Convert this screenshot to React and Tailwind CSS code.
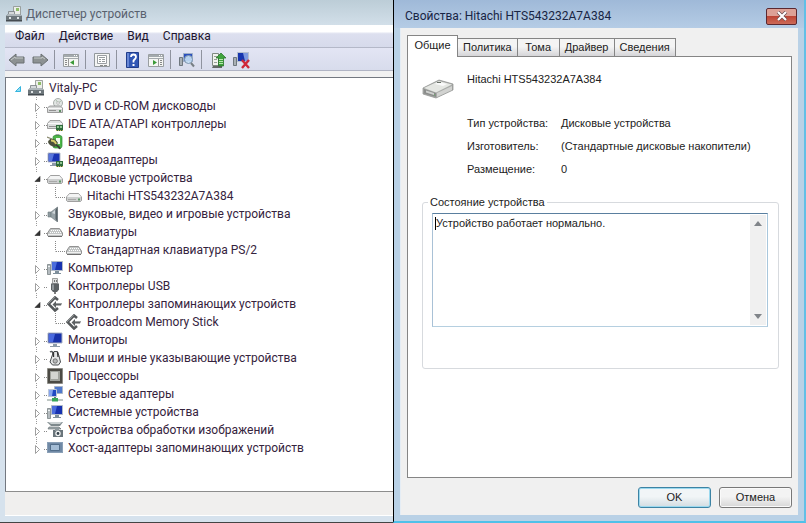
import React from "react";

const icons = {
  root: (
    <>
      <path d="M7.500 .5h7v8h-7z" fill="#eceeea" stroke="#8a8f8c" strokeWidth=".8" />
      <path d="M10 2h3v3h-3z" fill="#8fbd68" />
      <path d="M2.500 5.500h6v3h-6z" fill="#d5d9db" stroke="#777e82" strokeWidth=".8" />
      <path d="M0 10l2-2h12l2 2v5H0z" fill="#6d767b" />
      <path d="M2 8h12l1.500 2H.5z" fill="#aeb6ba" />
      <path d="M3 11h2v2H3zM11 11h2v2h-2z" fill="#e2e6e8" />
      <path d="M0 14h16v1.500H0z" fill="#444b50" />
    </>
  ),
  dvd: (
    <>
      <circle cx="11" cy="5" r="4.500" fill="#e2e6e4" stroke="#a8aeab" />
      <path d="M9 2l2 3 3-2" stroke="#a9bfab" fill="none" />
      <circle cx="11" cy="5" r="1.300" fill="#fff" stroke="#999" strokeWidth=".6" />
      <path d="M2.500 8h11l2 2v4.500H.5V10z" fill="#d5d7d7" stroke="#888" strokeWidth=".8" />
      <path d="M1 10.500h14" stroke="#f8f8f8" />
      <path d="M2 12.500h7" stroke="#909090" />
      <path d="M12 12h2v2h-2z" fill="#5f8f63" />
    </>
  ),
  ide: (
    <>
      <path d="M3 4.500h10l2.500 3v5H.5v-5z" fill="#dcdede" stroke="#8b8b8b" strokeWidth=".8" />
      <path d="M1 7.500h14" stroke="#f9f9f9" />
      <path d="M2 10.500h7" stroke="#909090" />
      <path d="M9 9h7v6H9z" fill="#2f6b3c" />
      <path d="M10 10h2v2h-2zM13 10h2v2h-2z" fill="#8fc490" />
      <path d="M9 14.500h7" stroke="#c8b567" strokeDasharray="1 1" />
    </>
  ),
  battery: (
    <>
      <path d="M8.500 0h4v2h-4z" fill="#9fa8a0" />
      <rect x="6" y="1.500" width="9" height="12.500" rx="2" fill="#4db548" stroke="#2d8a30" strokeWidth=".7" />
      <path d="M9 4h4v6H9z" fill="#f1faee" />
      <path d="M0 3l5 2M1 7l3 1" stroke="#8a8a70" strokeWidth="1.200" />
      <path d="M3 5q5-1 8 4l-3 4q-6-1-7-5z" fill="#4b4f3c" />
      <path d="M4 6.500q4 0 5 3.500" fill="none" stroke="#d6cc6a" strokeWidth="2" />
      <path d="M9 11q3 1 4 4" fill="none" stroke="#3b4236" strokeWidth="2" />
    </>
  ),
  video: (
    <>
      <path d="M1 1h12v9H1z" fill="#1a34b4" stroke="#b6bdc8" />
      <path d="M2 2h5l-2 7H2z" fill="#5775dd" />
      <path d="M5 11h4v2H5zM3 13h8v1H3z" fill="#8b98a8" />
      <path d="M9 9h7v6H9z" fill="#2f6b3c" />
      <path d="M10 10h2v2h-2zM13 10h2v2h-2z" fill="#8fc490" />
      <path d="M9 14.500h7" stroke="#c8b567" strokeDasharray="1 1" />
    </>
  ),
  disk: (
    <>
      <path d="M3.500 5.500h9l3 3.500v3.500l-1 1h-13l-1-1V9z" fill="#cdcfcf" stroke="#8e8e8e" strokeWidth=".8" />
      <path d="M3.500 6h9l2.500 3H1z" fill="#f3f4f4" />
      <path d="M2 11.500h8" stroke="#a8a8a8" />
      <path d="M12 10.500h2v2h-2z" fill="#5f9a69" />
    </>
  ),
  sound: (
    <>
      <path d="M1 6h3v5H1z" fill="#8e9aa0" stroke="#6d787e" strokeWidth=".6" />
      <path d="M4 6l6.500-5v15L4 11z" fill="#98a3a8" stroke="#6d787e" strokeWidth=".6" />
      <path d="M8.500 4l2-3v15l-2-3z" fill="#566167" />
      <path d="M5 7l3-3v4z" fill="#cfd6d9" />
    </>
  ),
  keyboard: (
    <>
      <path d="M3.500 4.500h9L15.500 9v2.500l-1 1h-13l-1-1V9z" fill="#c3c6c6" stroke="#7e7e7e" strokeWidth=".8" />
      <path d="M4 6.500h9" stroke="#fff" strokeDasharray="1 1" />
      <path d="M3 8.500h11" stroke="#fff" strokeDasharray="1 1" />
      <path d="M1 10.500h14" stroke="#f0f0f0" />
      <path d="M1 12.500h14" stroke="#6f6f6f" />
    </>
  ),
  computer: (
    <>
      <path d="M.5 4.500h3v10h-3z" fill="#b4bbbf" stroke="#6c7579" strokeWidth=".7" />
      <path d="M1 6h2v1H1z" fill="#eef1f2" />
      <path d="M4.500 1.500h11v9h-11z" fill="#1732b0" stroke="#b0bac8" />
      <path d="M5 2h5l-2 8H5z" fill="#4a6cdc" />
      <path d="M8 11h4v2H8zM6 13h8v1H6z" fill="#7f909c" />
    </>
  ),
  usb: (
    <>
      <path d="M5.500 .5h5v5h-5z" fill="#dfe1e1" stroke="#8a8a8a" strokeWidth=".8" />
      <path d="M7 2h1v2H7zM9 2h1v2H9z" fill="#777" />
      <path d="M4 5.500h8v6L10 14H6l-2-2.500z" fill="#5c6164" />
      <path d="M5 6.500h2V12H5z" fill="#90969a" />
      <path d="M8 14v2" stroke="#555" strokeWidth="1.500" />
    </>
  ),
  storage: (
    <>
      <path d="M11 4L8 1.500 1.500 8 8 14.500l3-2.500" fill="none" stroke="#55595b" strokeWidth="2.600" />
      <path d="M8 .8L1 8" stroke="#a2a6a8" strokeWidth=".8" />
      <path d="M5.500 8.500L9 5v2h6l-1 2.500H9V12z" fill="#5d6163" />
      <path d="M9 7.500h6" stroke="#a9adae" strokeWidth=".8" />
    </>
  ),
  monitor: (
    <>
      <path d="M1 1h14v10H1z" fill="#1731aa" stroke="#a9b2c4" />
      <path d="M2 2h6l-2 8H2z" fill="#4969df" />
      <path d="M6 12h4v2H6zM3 14h10v1H3z" fill="#8d9caa" />
    </>
  ),
  mouse: (
    <>
      <path d="M3 2q3-2 3 3" fill="none" stroke="#555a5c" strokeWidth="1.500" />
      <path d="M7 1.500h3.500L12 6l1.500 6-2 3h-6L3 12l2-6z" fill="#e3e5e5" stroke="#484c4e" />
      <path d="M6.500 2v5M10.500 2l.5 5" stroke="#333" strokeWidth="1.300" />
      <circle cx="8.200" cy="11" r="2.200" fill="#b6b8b8" stroke="#555" strokeWidth=".7" />
    </>
  ),
  cpu: (
    <>
      <path d="M.5 .5h15v15H.5z" fill="#4b4a44" stroke="#74726a" strokeDasharray="1 1" />
      <path d="M3 3h10v10H3z" fill="#a0a39d" />
      <path d="M4 4h7v7H4z" fill="#d3d5d1" />
    </>
  ),
  network: (
    <>
      <path d="M7.500 .5h8v7h-8z" fill="#4f79cd" stroke="#a9b6c8" />
      <path d="M1.500 3.500h8v7h-8z" fill="#2049c3" stroke="#bdc7d7" />
      <path d="M2 4h4l-1 6H2z" fill="#87a6ee" />
      <path d="M7 11h2v2H7z" fill="#69777f" />
      <path d="M0 14h16" stroke="#a9b5b1" strokeWidth="1.500" />
      <path d="M5 12h6v3.500H5z" fill="#39a75a" />
    </>
  ),
  camera: (
    <>
      <path d="M0 0h16l-3 4H4z" fill="#7e898c" />
      <path d="M1 0h14l-2 2H4z" fill="#ccd2d3" />
      <path d="M2 5h10l2 2H1z" fill="#a6afb2" stroke="#5a6568" strokeWidth=".6" />
      <path d="M6 8h10v7H6z" fill="#6a757b" />
      <path d="M8 7h4v2H8z" fill="#8f999d" />
      <circle cx="11" cy="11.500" r="2.700" fill="#f2f4f4" />
      <circle cx="11" cy="11.500" r="1.400" fill="#35424b" />
    </>
  ),
  host: (
    <>
      <path d="M0 2h16v11H0z" fill="#7089a5" />
      <path d="M.5 2.500h15v10H.5z" fill="none" stroke="#a5b6c8" strokeDasharray="1 1" />
      <path d="M3.500 4.500h9v6h-9z" fill="#a3bcd5" stroke="#4b6784" strokeWidth=".9" />
    </>
  ),
};

function DeviceIcon({ name }) {
  return (
    <svg viewBox="0 0 16 16" className="size-4 shrink-0" aria-hidden="true">
      {icons[name]}
    </svg>
  );
}

const tree = [
  { icon: "dvd", label: "DVD и CD-ROM дисководы" },
  { icon: "ide", label: "IDE ATA/ATAPI контроллеры" },
  { icon: "battery", label: "Батареи" },
  { icon: "video", label: "Видеоадаптеры" },
  { icon: "disk", label: "Дисковые устройства", child: "Hitachi HTS543232A7A384" },
  { icon: "sound", label: "Звуковые, видео и игровые устройства" },
  { icon: "keyboard", label: "Клавиатуры", child: "Стандартная клавиатура PS/2" },
  { icon: "computer", label: "Компьютер" },
  { icon: "usb", label: "Контроллеры USB" },
  { icon: "storage", label: "Контроллеры запоминающих устройств", child: "Broadcom Memory Stick" },
  { icon: "monitor", label: "Мониторы" },
  { icon: "mouse", label: "Мыши и иные указывающие устройства" },
  { icon: "cpu", label: "Процессоры" },
  { icon: "network", label: "Сетевые адаптеры" },
  { icon: "computer", label: "Системные устройства" },
  { icon: "camera", label: "Устройства обработки изображений" },
  { icon: "host", label: "Хост-адаптеры запоминающих устройств" },
];

function Branch({ open, last }) {
  return (
    <svg viewBox="0 0 15 18" className="h-[18px] w-[15px] shrink-0" aria-hidden="true">
      <path d={last ? "M4.500 0v5" : "M4.500 0v4M4.500 16v2"} stroke="#9a9a9a" strokeDasharray="1 1" />
      <path d="M12 10.500h3" stroke="#888" strokeDasharray="1 1" />
      {open ? (
        <path d="M8 7.500v5H3z" fill="#333" stroke="#222" strokeWidth=".6" />
      ) : (
        <path d="M3.500 6.500v8l4-4z" fill="#fff" stroke="#a0a0a0" />
      )}
    </svg>
  );
}

function ChildBranch() {
  return (
    <svg viewBox="0 0 34 18" className="h-[18px] w-[34px] shrink-0" aria-hidden="true">
      <path d="M4.500 0v18M23.500 0v10.500M24 10.500h10" fill="none" stroke="#888" strokeDasharray="1 1" />
    </svg>
  );
}

function DeviceTree() {
  return (
    <ul className="pt-px text-[12px] leading-[18px] text-[#35233d]">
      <li>
        <div className="flex items-center pl-2">
          <svg viewBox="0 0 14 18" className="h-[18px] w-[14px] shrink-0" aria-hidden="true">
            <path d="M6.500 7.500v5h-5z" fill="#8fdcf3" stroke="#35b5df" />
          </svg>
          <DeviceIcon name="root" />
          <span className="pl-[5px]">Vitaly-PC</span>
        </div>
        <ul className="pl-[26px]">
          {tree.map((node, i) => (
            <li key={node.label}>
              <div className="flex items-center">
                <Branch open={Boolean(node.child)} last={i === tree.length - 1} />
                <DeviceIcon name={node.icon} />
                <span className="pl-[5px] whitespace-nowrap">{node.label}</span>
              </div>
              {node.child && (
                <ul>
                  <li className="flex items-center">
                    <ChildBranch />
                    <DeviceIcon name={node.icon} />
                    <span className="pl-[5px] whitespace-nowrap">{node.child}</span>
                  </li>
                </ul>
              )}
            </li>
          ))}
        </ul>
      </li>
    </ul>
  );
}

function ToolButton({ label, children }) {
  return (
    <button type="button" aria-label={label} className="flex size-[18px] items-center justify-center">
      <svg viewBox="0 0 18 18" className="size-[18px]" aria-hidden="true">
        {children}
      </svg>
    </button>
  );
}

function Divider() {
  return <div className="mr-[2px] h-[19px] w-px bg-[#8f939f]" />;
}

function PaneGlyph({ left }) {
  return (
    <>
      <path d="M1.500 3.500h15v12h-15z" fill="#f5f6f4" stroke="#999ea1" />
      <path d="M2 4h14v2H2z" fill="#a4aaae" />
      <path d="M12 4h1v1h-1zM14 4h1v1h-1z" fill="#fff" />
      <path d="M2 7.500h14" stroke="#a5aaae" />
      {left ? (
        <>
          <path d="M6.500 8v7" stroke="#999" />
          <path d="M3 9.500h2M3 11.500h2M3 13.500h2" stroke="#888" />
          <path d="M12 9v5l-4-2.500z" fill="#3b9a38" />
        </>
      ) : (
        <>
          <path d="M11.500 8v7" stroke="#999" />
          <path d="M13 9.500h2M13 11.500h2M13 13.500h2" stroke="#888" />
          <path d="M6 9v5l4-2.500z" fill="#3b9a38" />
        </>
      )}
    </>
  );
}

function DeviceManager() {
  return (
    <section className="flex min-w-0 flex-1 flex-col border-b border-[#444] bg-[#d6e2ed] font-['Roboto','Noto_Sans',sans-serif]">
      <header className="flex h-[25px] items-center gap-1 bg-linear-to-b from-[#bccdd7] to-[#d2dfe9] pt-[3px] pl-[6px]">
        <DeviceIcon name="root" />
        <h1 className="text-[12px] text-[#59616e]">Диспетчер устройств</h1>
      </header>
      <div className="flex flex-1 flex-col pb-[6px] pl-[5px]">
        <nav className="flex h-[23px] items-center gap-[14px] border-b border-[#b4b8c8] bg-linear-to-b from-white from-30% via-[#dde0ef] via-40% to-[#d6daeb] pl-[10px] text-[12px] text-[#21152d]">
          <button type="button">Файл</button>
          <button type="button">Действие</button>
          <button type="button">Вид</button>
          <button type="button">Справка</button>
        </nav>
        <div className="flex h-[23px] items-center gap-[5px] border-b border-[#b0b4c4] bg-linear-to-b from-[#e3e5f4] to-[#d8dcec] pt-px pl-[3px]">
          <ToolButton label="Назад">
            <path d="M1 9l7-6v3h8v6H8v3z" fill="#8d9293" stroke="#6a7072" />
            <path d="M3 9l4-3v1h8" fill="none" stroke="#c6caca" />
          </ToolButton>
          <ToolButton label="Вперёд">
            <path d="M17 9l-7-6v3H2v6h8v3z" fill="#8d9293" stroke="#6a7072" />
            <path d="M3 7h8V6l3 2" fill="none" stroke="#c6caca" />
          </ToolButton>
          <Divider />
          <ToolButton label="Дерево консоли">
            <PaneGlyph left />
          </ToolButton>
          <Divider />
          <ToolButton label="Свойства">
            <path d="M1.500 2.500h15v13h-15z" fill="#f4f5f4" stroke="#92989c" />
            <path d="M4.500 4.500h9v8h-9z" fill="#fff" stroke="#9a9ea2" />
            <path d="M6 6.500h6M6 8.500h2M9 8.500h3M6 10.500h2M9 10.500h3" stroke="#959b9d" />
            <path d="M7 14.500h3M11 14.500h3" stroke="#888" />
          </ToolButton>
          <Divider />
          <ToolButton label="Справка">
            <path d="M2.500 1.500h12v15h-12z" fill="#3157b5" stroke="#213d8b" />
            <path d="M3 2h2v14H3z" fill="#6786d5" />
            <path d="M7 6q0-2.500 2.500-2.500T12 6q0 1-1.500 2.500L9.500 9.500v2" fill="none" stroke="#fff" strokeWidth="1.800" />
            <path d="M8.500 13h2v2h-2z" fill="#fff" />
          </ToolButton>
          <ToolButton label="Панель действий">
            <PaneGlyph />
          </ToolButton>
          <Divider />
          <ToolButton label="Обновить конфигурацию">
            <path d="M1.500 6.500h3v8h-3z" fill="#a9b0b5" stroke="#596268" strokeWidth=".8" />
            <path d="M5.500 2.500h9v8h-9z" fill="#2b50bd" stroke="#9daec6" />
            <circle cx="10.500" cy="8.500" r="4" fill="#c6e0f5" fillOpacity=".9" stroke="#7d95ae" />
            <path d="M13 12l3 3.500" stroke="#777f84" strokeWidth="2" />
          </ToolButton>
          <Divider />
          <ToolButton label="Обновить драйвер">
            <path d="M3.500 2.500h6v12h-6z" fill="#f1f3ee" stroke="#7f8a81" />
            <path d="M4 15h9v2H3z" fill="#626965" />
            <path d="M5 5.500h3M5 8.500h3M5 11.500h3" stroke="#979f97" />
            <path d="M12 2l5 5h-2.500v8h-5V7H7z" fill="#3fa33d" stroke="#216c24" strokeWidth=".7" />
            <path d="M10 8.500h4M10 10.500h4M10 12.500h4" stroke="#b7e5af" />
          </ToolButton>
          <ToolButton label="Удалить устройство">
            <path d="M1.500 6.500h3v8h-3z" fill="#a9b0b5" stroke="#596268" strokeWidth=".8" />
            <path d="M5.500 1.500h11v9h-11z" fill="#1735ae" stroke="#b5bfce" />
            <path d="M11 2h5v8h-3z" fill="#7f9ae0" />
            <path d="M10 9l7 8M17 9l-7 8" stroke="#cf2638" strokeWidth="2.400" />
          </ToolButton>
        </div>
        <div className="h-[6px] bg-[#f1f1f1]" />
        <main className="flex-1 border-t border-l border-[#737880] bg-white">
          <DeviceTree />
        </main>
        <footer className="h-[25px] border-t border-b border-t-[#8d8d8d] border-b-white bg-[#f0efee]" />
      </div>
    </section>
  );
}

const tabs = ["Политика", "Тома", "Драйвер", "Сведения"];

const details = [
  ["Тип устройства:", "Дисковые устройства"],
  ["Изготовитель:", "(Стандартные дисковые накопители)"],
  ["Размещение:", "0"],
];

function Properties() {
  return (
    <section
      role="dialog"
      aria-labelledby="dialog-title"
      className="flex w-[413px] shrink-0 flex-col border-r-2 border-b-2 border-l border-r-[#62bfe6] border-b-[#4fc0e8] border-l-black bg-[#b9d1e6] px-[6px] pb-[6px] font-['Liberation_Sans',Arial,sans-serif] text-[11px] text-[#222]"
    >
      <header className="-mx-[6px] flex h-[28px] items-center justify-between bg-linear-to-b from-[#9fb9d8] to-[#b5cce5] pt-1 pr-[7px] pl-[11px]">
        <h2 id="dialog-title" className="font-['Roboto','Noto_Sans',sans-serif] text-[12px] text-[#182544]">
          Свойства: Hitachi HTS543232A7A384
        </h2>
        <button
          type="button"
          aria-label="Закрыть"
          className="flex h-[17px] w-[31px] items-center justify-center rounded-[2px] border border-[#5b2830] bg-linear-to-b from-[#dda196] from-45% via-[#bd4535] via-50% to-[#cc6a58]"
        >
          <svg viewBox="0 0 12 10" className="h-[10px] w-3" aria-hidden="true">
            <path d="M2 1l8 8M10 1L2 9" stroke="#65484d" strokeWidth="3.500" />
            <path d="M2 1l8 8M10 1L2 9" stroke="#fff" strokeWidth="2.200" />
          </svg>
        </button>
      </header>

      <div className="flex flex-1 flex-col border-l border-[#e5edf5] bg-[#f0f0f0] px-[6px] pt-[7px] pb-[7px]">
        <div role="tablist" className="flex items-end">
          <button
            type="button"
            role="tab"
            aria-selected="true"
            className="z-10 -mb-px h-[22px] w-[51px] border border-b-0 border-[#858585] bg-white pb-[2px]"
          >
            Общие
          </button>
          {tabs.map((tab) => (
            <button
              key={tab}
              type="button"
              role="tab"
              aria-selected="false"
              className="h-[18px] min-w-[42px] border border-b-0 border-l-0 border-[#858585] bg-linear-to-b from-[#f4f4f4] from-45% to-[#d5d5d8] px-[5px]"
            >
              {tab}
            </button>
          ))}
        </div>

        <div role="tabpanel" className="flex-1 border border-[#858585] bg-white px-[14px] pt-[14px]">
          <div className="flex gap-[13px]">
            <svg viewBox="0 0 32 24" className="mt-[6px] h-6 w-8 shrink-0" aria-hidden="true">
              <path d="M1 11L17 3l14 4v6l-17 8L1 17z" fill="#a9aba9" stroke="#8b8d8b" strokeWidth=".7" />
              <path d="M2 11l15-7 13 3.500-16 8z" fill="#e5e7e3" />
              <path d="M2 12l12 4v4L2 16.500z" fill="#8b8d8b" />
              <path d="M4 13.500l8 2.500v2l-8-2.500z" fill="#cfd1cf" />
              <path d="M15 16l15-7v4l-15 7z" fill="#d1d2d0" />
              <path d="M17 5l8 2-4 2-8-2z" fill="#fafafa" />
              <path d="M15 5.500h4" stroke="#687068" />
              <path d="M12 18h1" stroke="#78a078" strokeWidth="2" />
            </svg>
            <div className="min-w-0 flex-1">
              <p className="leading-4">Hitachi HTS543232A7A384</p>
              <dl className="mt-[28px] grid grid-cols-[94px_1fr] gap-y-[7px] leading-4 whitespace-nowrap">
                {details.map(([name, value]) => (
                  <React.Fragment key={name}>
                    <dt>{name}</dt>
                    <dd>{value}</dd>
                  </React.Fragment>
                ))}
              </dl>
            </div>
          </div>

          <fieldset className="mt-[17px] mr-[-2px] h-[175px] rounded-[3px] border border-[#d7dade] px-[9px]">
            <legend className="-ml-[4px] px-[2px] leading-4">
              <label htmlFor="status">Состояние устройства</label>
            </legend>
            <div className="relative mt-[3px] mr-px flex h-[114px] border border-t-[#5a7f9f] border-r-[#a9c7dc] border-b-[#b5cfe0] border-l-[#a9c1d6]">
              <textarea
                id="status"
                readOnly
                value="Устройство работает нормально."
                className="min-w-0 flex-1 resize-none overflow-hidden bg-white px-[3px] pt-px leading-4 outline-none"
              />
              <span className="absolute top-[3px] left-[2px] h-[13px] w-px bg-black" />
              <div className="my-px mr-px flex w-4 flex-col items-center justify-between bg-[#f0f0f0] py-[6px]">
                <button type="button" aria-label="Прокрутить вверх">
                  <svg viewBox="0 0 8 5" className="h-[5px] w-2" aria-hidden="true">
                    <path d="M4 0l4 5H0z" fill="#808489" />
                  </svg>
                </button>
                <button type="button" aria-label="Прокрутить вниз">
                  <svg viewBox="0 0 8 5" className="h-[5px] w-2" aria-hidden="true">
                    <path d="M4 5l4-5H0z" fill="#808489" />
                  </svg>
                </button>
              </div>
            </div>
          </fieldset>
        </div>

        <div className="flex justify-end gap-2 pt-[9px]">
          <button
            type="button"
            className="h-[21px] w-[73px] rounded-[3px] border border-[#3d83a4] bg-linear-to-b from-[#f1f5f7] from-45% to-[#d2dce1] shadow-[inset_0_0_0_1px_#9bd9ef]"
          >
            OK
          </button>
          <button
            type="button"
            className="h-[21px] w-[73px] rounded-[3px] border border-[#787878] bg-linear-to-b from-[#f3f3f3] from-45% to-[#d7d7d7] shadow-[inset_0_0_0_1px_#fafafa]"
          >
            Отмена
          </button>
        </div>
      </div>
    </section>
  );
}

export default function App() {
  return (
    <div className="flex min-h-screen bg-white">
      <DeviceManager />
      <Properties />
    </div>
  );
}
